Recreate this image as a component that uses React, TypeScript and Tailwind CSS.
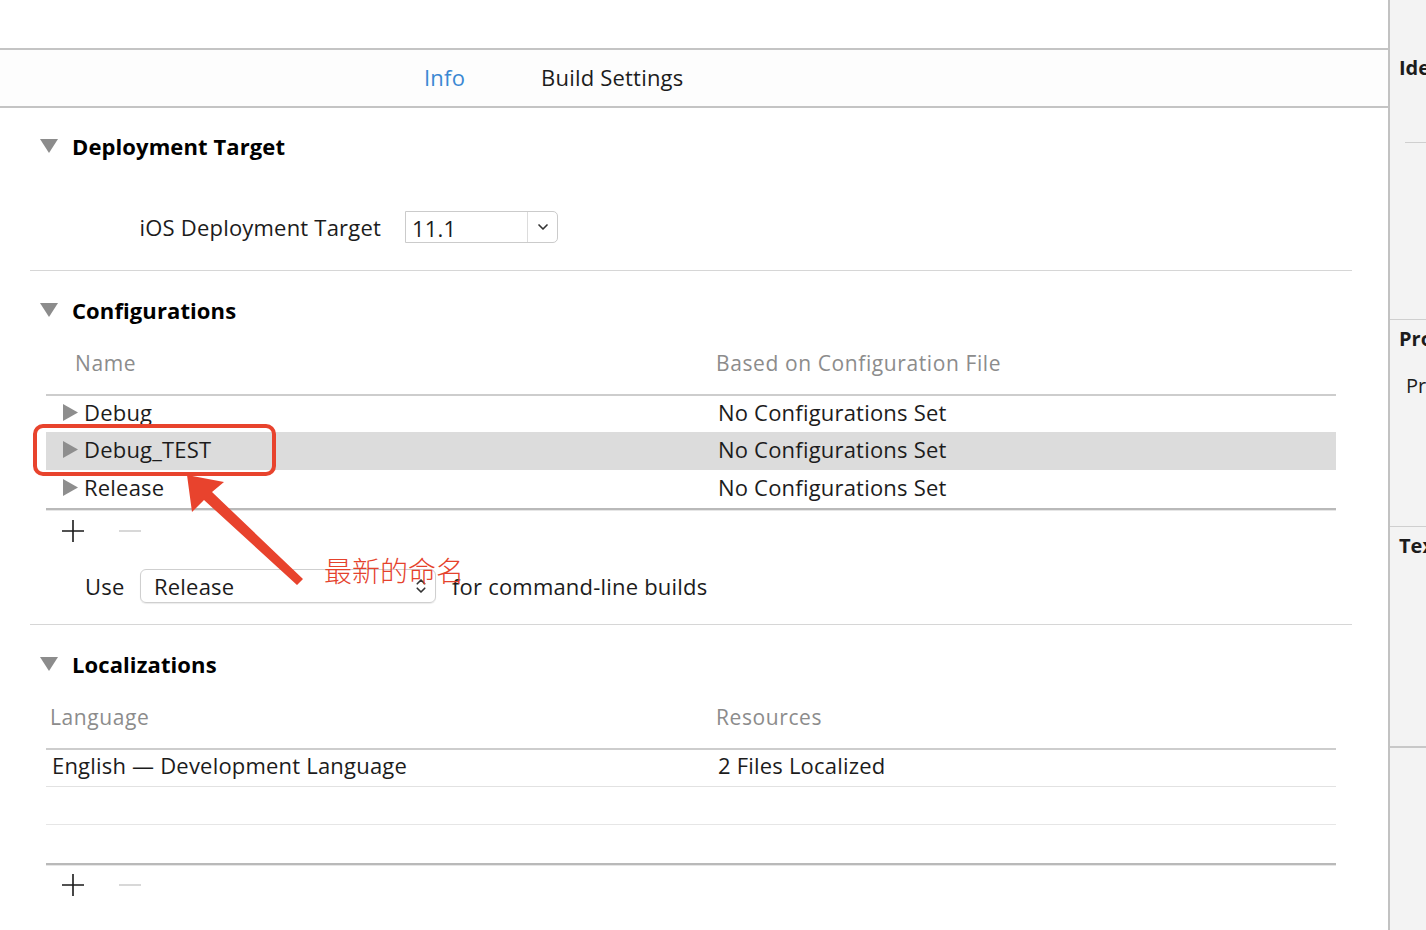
import { ChevronDown, ChevronsUpDown } from "lucide-react";
import type { FC } from "react";

const DownTri: FC = () => (
  <svg width="18" height="14" viewBox="0 0 18 14" className="shrink-0">
    <polygon points="0,0 18,0 9,14" fill="#8c8c8c" />
  </svg>
);

const RightTri: FC = () => (
  <svg width="15" height="17" viewBox="0 0 15 17" className="shrink-0">
    <polygon points="0,0 15,8.5 0,17" fill="#8e8e8e" />
  </svg>
);

const PlusMinus: FC = () => (
  <div className="flex items-center h-full pl-[16px] gap-[35px]">
    <svg width="22" height="22" viewBox="0 0 22 22">
      <path d="M11 0v22M0 11h22" stroke="#1a1a1a" strokeWidth="1.6" />
    </svg>
    <svg width="22" height="22" viewBox="0 0 22 22">
      <path d="M0 11h22" stroke="#cfcfcf" strokeWidth="1.6" />
    </svg>
  </div>
);

const SectionHeader: FC<{ title: string }> = ({ title }) => (
  <div className="flex items-center h-[28px] pl-[40px] gap-[14px]">
    <DownTri />
    <span className="text-[22px] font-bold text-black tracking-[0.1px]">{title}</span>
  </div>
);

const Separator: FC = () => <div className="ml-[30px] w-[1322px] h-px bg-[#d6d6d6]" />;

const configs = [
  { name: "Debug", h: "h-[36px]", sel: false },
  { name: "Debug_TEST", h: "h-[38px]", sel: true },
  { name: "Release", h: "h-[38px]", sel: false },
];

export default function App() {
  return (
    <div className="flex h-[930px] w-[1426px] overflow-hidden bg-white text-[#1c1c1c] text-[22px] tracking-[0.2px] font-['Open_Sans','Noto_Sans_CJK_SC',sans-serif]">
      <div className="relative w-[1388px] shrink-0 flex flex-col">
        <div className="h-[48px]" />
        <div className="h-[60px] border-y-2 border-[#c4c4c4] bg-[#fdfdfd] flex items-center pl-[424px] gap-[76px] pb-[2px]">
          <span className="text-[#3b88d3]">Info</span>
          <span>Build Settings</span>
        </div>

        {/* Deployment Target */}
        <div className="mt-[24px]">
          <SectionHeader title="Deployment Target" />
        </div>
        <div className="mt-[51px] flex items-center h-[32px]">
          <div className="w-[381px] text-right">iOS Deployment Target</div>
          <div className="ml-[24px] flex h-[32px] w-[153px] border border-[#cbcbcb] rounded-r-[5px] bg-white">
            <div className="flex-1 flex items-center pl-[6px] pt-[3px]">11.1</div>
            <div className="w-[30px] border-l border-[#dcdcdc] flex items-center justify-center">
              <ChevronDown size={16} strokeWidth={2.5} color="#333" />
            </div>
          </div>
        </div>
        <div className="mt-[27px]">
          <Separator />
        </div>

        {/* Configurations */}
        <div className="mt-[25px]">
          <SectionHeader title="Configurations" />
        </div>
        <div className="mt-[26px] ml-[46px] w-[1290px] flex items-center h-[28px] text-[21px] tracking-[0.6px] text-[#8c8c8c]">
          <div className="w-[670px] pl-[29px]">Name</div>
          <div>Based on Configuration File</div>
        </div>
        <div className="mt-[16px] ml-[46px] w-[1290px] border-t-2 border-[#cdcdcd]">
          {configs.map((c) => (
            <div
              key={c.name}
              className={`${c.h} flex items-center pb-[4px] ${c.sel ? "bg-[#dcdcdc]" : ""}`}
            >
              <div className="w-[672px] flex items-center pl-[17px] gap-[6px]">
                <RightTri />
                <span>{c.name}</span>
              </div>
              <div>No Configurations Set</div>
            </div>
          ))}
          <div className="h-[3px] border-t-2 border-[#b9b9b9] bg-[#e6e6e6]" />
        </div>
        <div className="ml-[46px] h-[40px]">
          <PlusMinus />
        </div>
        <div className="mt-[18px] flex items-center h-[34px]">
          <span className="pl-[85px] w-[140px]">Use</span>
          <div className="flex items-center w-[296px] h-[34px] border border-[#cfcfcf] rounded-[6px] shadow-[0_1px_1px_rgba(0,0,0,0.08)] pl-[13px] pr-[5px]">
            <span className="flex-1">Release</span>
            <ChevronsUpDown size={18} strokeWidth={2.2} color="#333" />
          </div>
          <span className="ml-[16px]">for command-line builds</span>
        </div>
        <div className="mt-[21px]">
          <Separator />
        </div>

        {/* Localizations */}
        <div className="mt-[25px]">
          <SectionHeader title="Localizations" />
        </div>
        <div className="mt-[26px] ml-[46px] w-[1290px] flex items-center h-[28px] text-[21px] tracking-[0.6px] text-[#8c8c8c]">
          <div className="w-[670px] pl-[4px]">Language</div>
          <div>Resources</div>
        </div>
        <div className="mt-[16px] ml-[46px] w-[1290px] border-t-2 border-[#cdcdcd]">
          <div className="h-[37px] flex items-center pb-[5px] border-b border-[#e2e2e2]">
            <div className="w-[672px] pl-[6px]">English — Development Language</div>
            <div>2 Files Localized</div>
          </div>
          <div className="h-[38px] border-b border-[#e6e6e6]" />
          <div className="h-[38px]" />
          <div className="h-[3px] border-t-2 border-[#b9b9b9] bg-[#e6e6e6]" />
        </div>
        <div className="ml-[46px] h-[38px]">
          <PlusMinus />
        </div>

        {/* annotation overlay */}
        <svg
          className="absolute left-0 top-0 pointer-events-none"
          width="1388"
          height="930"
          viewBox="0 0 1388 930"
        >
          <rect x="35" y="426" width="239" height="48" rx="8" fill="none" stroke="#e8432d" strokeWidth="4" />
          <polygon
            points="187,475 224,482 212,492 303,579 297,585 204,500 192,512"
            fill="#e8432d"
          />
        </svg>
        <span className="absolute left-[324px] top-[552px] text-[28px] leading-[36px] tracking-normal text-[#e5422c] font-['Noto_Sans_CJK_SC',sans-serif] font-light">
          最新的命名
        </span>
      </div>

      {/* inspector strip */}
      <div className="flex-1 border-l-2 border-[#c2c2c2] bg-[#f3f3f3] flex flex-col overflow-hidden whitespace-nowrap text-[20px] tracking-normal">
        <div className="h-[320px] border-b border-[#cfcfcf] flex flex-col">
          <div className="mt-[55px] pl-[9px] font-bold leading-[26px]">Identity and Type</div>
          <div className="mt-[61px] ml-[15px] h-px bg-[#cfcfcf]" />
        </div>
        <div className="h-[207px] border-b border-[#cfcfcf] flex flex-col">
          <div className="mt-[6px] pl-[9px] font-bold leading-[26px]">Project Document</div>
          <div className="mt-[21px] pl-[16px] leading-[26px]">Project Format</div>
        </div>
        <div className="h-[221px] border-b-2 border-[#c8c8c8] flex flex-col">
          <div className="mt-[6px] pl-[9px] font-bold leading-[26px]">Text Settings</div>
        </div>
        <div className="flex-1" />
      </div>
    </div>
  );
}
